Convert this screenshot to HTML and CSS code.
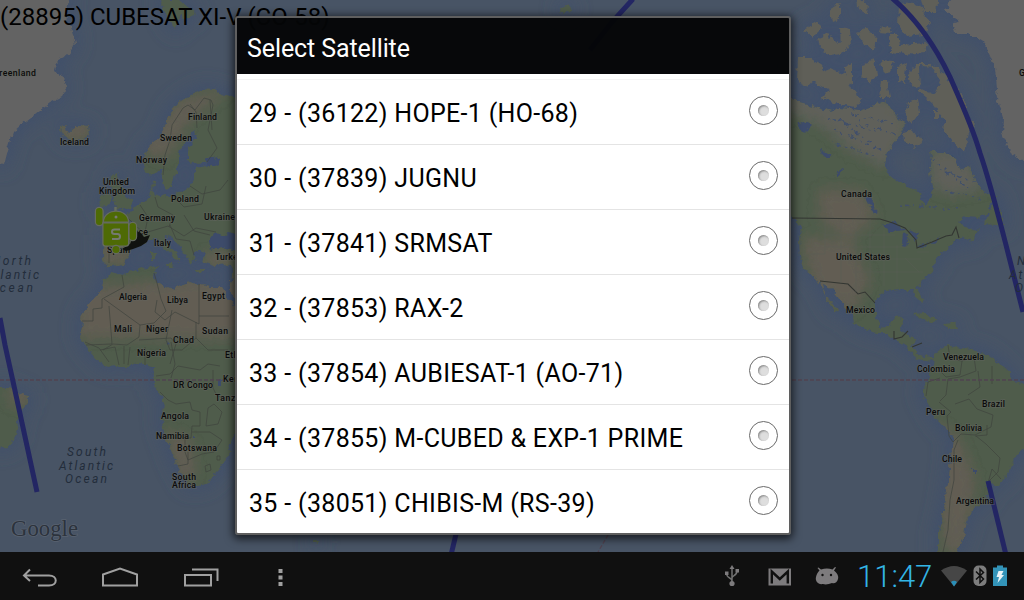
FILE: index.html
```html
<!DOCTYPE html>
<html lang="en">
<head>
    <meta charset="UTF-8">
    <meta name="viewport" content="width=device-width, initial-scale=1.0">
    <title>Satellite Tracker</title>
    <link rel="stylesheet" href="styles.css">
</head>
<body>
    <div class="screen">
        <div class="map">
            <svg class="map-canvas" width="1024" height="552" viewBox="0 0 1024 552">
                <defs>
                    <filter id="rough" x="0" y="0" width="1024" height="552" filterUnits="userSpaceOnUse">
                        <feTurbulence type="fractalNoise" baseFrequency="0.16" numOctaves="3" seed="4" result="n"/>
                        <feDisplacementMap in="SourceGraphic" in2="n" scale="7" xChannelSelector="R" yChannelSelector="G"/>
                    </filter>
                    <filter id="soft" x="-100" y="-100" width="1224" height="752" filterUnits="userSpaceOnUse">
                        <feGaussianBlur stdDeviation="9"/>
                    </filter>
                    <filter id="patch" x="-100" y="-100" width="1224" height="752" filterUnits="userSpaceOnUse">
                        <feGaussianBlur stdDeviation="6"/>
                    </filter>
                    <path id="eurasia" d="M245 98L225 95 214 90 202 89 190 95 178 103 170 112 165 125 160 138 150 145 145 152 143 165 147 175 155 172 160 168 163 180 166 190 172 187 174 178 178 170 178 160 180 150 186 142 190 135 195 130 198 135 192 143 188 150 188 160 198 164 210 162 207 166 195 168 195 178 190 186 184 190 172 195 160 197 154 195 152 188 157 181 153 182 150 192 147 200 138 204 130 212 124 216 133 222 133 238 122 240 103 239 103 260 107 267 113 267 123 265 128 256 133 248 140 245 148 240 155 238 160 241 165 250 172 256 176 260 179 262 177 255 170 247 163 240 165 236 172 238 180 247 186 255 190 263 196 260 193 254 200 250 205 252 203 262 215 266 229 265 234 268 229 290 235 300 245 320Z"/>
                    <path id="africa" d="M111 272L122 275 135 270 150 266 157 267 155 275 156 283 165 286 175 290 180 285 190 282 195 284 210 287 222 287 228 296 235 310 245 325 245 425 232 440 228 455 220 470 208 482 195 486 188 485 183 476 175 462 171 450 165 435 161 420 165 405 160 393 153 385 153 378 155 368 145 365 138 363 130 366 118 366 107 367 95 358 86 347 80 337 83 322 80 318 88 305 100 292 103 280Z"/>
                    <path id="namerica" d="M780 95L792 99 800 103 815 107 830 112 840 108 860 110 875 105 885 100 890 105 895 115 905 125 900 135 893 143 885 158 884 165 890 175 900 183 912 188 919 192 920 201 926 206 930 198 933 188 930 172 932 160 930 152 945 152 955 158 960 170 970 165 975 180 985 193 997 198 988 203 990 212 978 217 965 216 957 222 968 227 976 236 966 242 962 237 952 243 948 248 935 260 933 270 922 280 917 287 923 300 921 305 917 297 913 290 901 290 885 291 877 297 875 305 875 317 880 327 888 326 895 318 904 317 900 327 901 332 915 338 913 348 918 355 932 357 935 361 918 359 907 347 895 340 885 333 875 333 853 323 852 313 840 300 828 285 822 283 823 290 832 303 840 312 833 310 825 295 817 280 805 270 800 257 799 240 801 227 792 217 780 212Z"/>
                    <path id="samerica" d="M927 380L932 370 935 353 948 345 967 349 985 353 1008 370 1011 380 1030 386 1030 445 1015 457 1008 473 1000 485 985 482 989 490 985 503 972 508 967 520 964 535 955 556 938 556 938 533 945 503 950 470 953 437 937 420 922 393Z"/>
                    <path id="icecaps" d="M-5 -5L69 -5 65 15 72 30 75 45 68 55 58 60 55 70 62 75 66 90 62 97 50 103 35 115 22 125 13 133 8 150 4 165 -5 163ZM955 -5L1030 -5 1030 164 1012 155 1002 133 1003 117 998 100 995 67 985 43 968 33 955 33 952 23 960 22 945 10Z"/>
                    <path id="isles" d="M60 126L66 125 64 130 70 132 78 126 88 127 89 135 82 140 72 141 64 137ZM112 175L118 172 116 178 121 183 125 195 133 200 131 208 115 211 117 204 113 200 116 193 110 185ZM101 196L109 193 111 200 108 206 100 207ZM160 0L178 0 195 12 190 20 180 15 176 30 170 24ZM152 252h4v9h-4ZM164 264h9l-1 5ZM196 270h9v2h-9ZM-5 388L10 388 18 393 28 396 28 403 20 412 17 428 15 440 8 447 -5 448ZM989 212L995 198 1002 212 1004 226 985 224ZM966 234L980 228 972 242ZM913 314L925 313 938 321 930 322ZM943 324L955 323 957 328 946 328ZM560 8l8-4 4 5-9 6ZM314 540l4 0 0 4-4-1Z"/>
                    <path id="arctic" d="M797 57L810 57 824 66 820 74 808 87 796 80ZM815 74L830 68 845 74 850 88 862 97 856 107 838 104 822 98 829 91 813 82ZM803 30L818 21 822 28 812 38ZM818 38L828 34 838 44 850 42 845 52 832 56 820 48ZM829 10L840 3 840 18 832 21ZM857 -4L868 4 867 15 858 8ZM840 28L850 30 851 46 841 50ZM856 32L866 28 876 35 874 50 864 44ZM889 35L898 35 900 45 927 43 925 52 905 54 890 52ZM899 5L910 2 922 8 930 24 924 34 907 36 898 24ZM920 -4L938 -4 936 12 924 12ZM882 25L892 28 890 33 880 32ZM845 66L853 63 853 85 847 82ZM862 64L874 60 877 75 870 84 862 75ZM881 60L894 61 891 72 883 74ZM881 80L887 80 890 98 879 98ZM898 66L907 62 904 82 919 88 935 95 940 80 930 64 917 64 908 73 910 84 898 82ZM919 66L938 67 951 82 962 95 966 112 975 124 969 132 965 152 955 144 944 132 945 120 934 104 920 92ZM908 102L918 100 920 112 910 124 905 114ZM904 132L913 130 922 142 915 147 905 141ZM933 112h6v7h-6Z"/>
                    <clipPath id="land">
                        <use href="#eurasia"/><use href="#africa"/><use href="#namerica"/><use href="#samerica"/><use href="#isles"/>
                    </clipPath>
                </defs>

                <rect class="ocean" width="1024" height="552"/>
                <g class="shelf" filter="url(#soft)">
                    <use href="#eurasia"/><use href="#africa"/><use href="#namerica"/><use href="#samerica"/>
                    <use href="#icecaps"/><use href="#isles"/><use href="#arctic"/>
                </g>

                <g filter="url(#rough)">
                    <use href="#icecaps" class="ice"/>
                    <use href="#arctic" class="tundra"/>
                    <g class="green">
                        <use href="#eurasia"/><use href="#africa"/><use href="#namerica"/><use href="#samerica"/><use href="#isles"/>
                    </g>
                    <g clip-path="url(#land)">
                        <g class="dry" filter="url(#patch)">
                            <path d="M75 288L250 275 250 338 80 338Z"/>
                            <path d="M165 430L190 440 196 475 180 480Z"/>
                            <path d="M140 150L180 100 230 88 190 120 165 160Z"/>
                            <path d="M802 238L850 240 870 280 852 312 815 290Z"/>
                            <path d="M820 190L860 190 875 215 850 240 820 220Z"/>
                            <path d="M935 420L960 440 975 480 965 552 945 552Z"/>
                            <path d="M60 120h30v20H60ZM10 385h20v20H10ZM103 240h25v25h-25ZM205 252h30v14h-30Z"/>
                        </g>
                        <g class="pale" filter="url(#patch)">
                            <path d="M780 95L890 98 910 125 885 168 850 150 820 125 780 108Z"/>
                            <path d="M930 150L960 150 985 190 950 195 930 185Z"/>
                        </g>
                    </g>
                    <g class="water">
                        <path d="M208 241L214 233 222 236 228 233 245 238 245 251 220 247 210 250Z"/>
                        <path d="M206 158l8 0 4 5-10 3ZM214 155l8 4-4 6Z"/>
                        <path d="M882 225L895 222 904 230 890 232ZM903 232l5 2-2 14-4-2ZM909 230l10 4-4 8ZM917 246l12-3-8 5ZM930 242l10-4-6 6Z"/>
                        <path d="M797 125l10-4 5 4-8 8ZM820 150l12 4-3 4-7-2ZM835 172l9-4-6 8ZM866 198l3-2 8 16-3 2ZM218 380h5v5h-5ZM166 340l4 4-3 1ZM972 470h4v3h-4ZM192 436h3v3h-3Z"/>
                        <path class="lakes" d="M828 118l50 14M835 130l46 20M832 142l44 14M850 114l45 10M860 122l36 14M840 120l40 30M934 160l34 28M940 170l40 14M945 190l36 10M900 205l60 4"/>
                    </g>
                </g>

                <g class="borders">
                    <path d="M163 175L165 155 170 140 172 125 183 108 188 105 195 110 204 98 211 100 213 105 208 130 217 148 207 162M190 104L196 112 197 128M210 100L212 130M125 215l12 12 10 8M140 205l8 12-3 15M155 197l3 10 15 8-4 12M172 195l12 12 18-3 4-18M190 186l12 8 18-4 8-10M148 232l20-6 16 10 12-8 20 4M170 225l6 14 14 2 4 14M184 215l10 16 16 4M105 244l4 2 0 17"/>
                    <path d="M122 275l2 12-22 12v9l-9 1v12h-11M104 299l36 26 14-2 12-12-5-12-4-16-3-10M109 306l3 38-26 1M157 300l-2 12 10 8 10-8 24 12 0-40M199 316h30M196 322l0 16-14 12-12 0-4-10 6-30M140 325l-1 12-12 8-14-1-10 6M139 340l32-2 5 6-6 20M85 342l14 6 10 14M100 350l15-3 4 18M124 346l0 18M130 347l-2 18M145 365l0-18M171 342l4 22-4 14M196 338l12 12 20 0M156 376l14-2 8-8 22 4 8-6 12 2M160 392l8 8 8 4 14-2 2 8 8 2v14h-8l-1 12-28 0M213 370l0 18 4 8 18 4M208 408l6-4 8 8-4 12-12 2ZM192 432h18l12 8-8 12-12 2-14 6-3-8v-18M205 466l5-2 1 6-5 2ZM188 452l0 12-10 2M217 456l3 0 0 4-3 0Z"/>
                    <path class="strong" d="M792 218L880 219 893 223 905 228 916 240 917 248 932 242 946 236 952 235 956 227 959 238M820 281L848 284 858 294 865 292 875 303M894 331l0 8 8-2 6-6M912 347l10-4"/>
                    <path class="states" d="M825 219v35h-14M841 219v64M856 228v64M870 219v70M884 230v56M897 245v42M825 235h70M826 247h84M841 259h80M857 272h66M905 258l14 14M917 252l12 0"/>
                    <path d="M948 345l2 14 12 2-2 14-14 2-8-8M962 361l12-4 2 14-16 6-12 2-2 16-6 6M940 378l-12 4-2 14M955 404l14-5 8 10 16 6-2 12-16 8-14-1-8 8-4-6-2-20 4-4-12-10M976 436l10 8 14 14-2 14-10 10M978 371l2 16-12 8M992 366l0 18M958 440l-4 10 0 30-4 20-2 30-5 22M988 483l4-14 9 10M975 436l12-1 0-10"/>
                </g>

                <path class="equator" d="M0 380H1024"/>
                <path class="dateline" d="M608 535L598 552"/>

                <g class="track">
                    <path d="M0 318L5 345 14 386 37 492"/>
                    <path d="M633 -1L612 22 590 50"/>
                    <path d="M457 530L451 555"/>
                    <path d="M892 -2C918 20 938 52 950 77C962 104 973 128 980 153C988 176 996 206 1006 245L1023 312"/>
                    <path d="M988 481L1006 555"/>
                </g>

                <g class="labels">
                    <text x="-7" y="76" textLength="43">Greenland</text>
                    <text x="60" y="145" textLength="29">Iceland</text>
                    <text x="188" y="120" textLength="29">Finland</text>
                    <text x="160" y="141" textLength="32">Sweden</text>
                    <text x="136" y="163" textLength="31">Norway</text>
                    <text x="103" y="185" textLength="26">United</text>
                    <text x="99" y="194" textLength="36">Kingdom</text>
                    <text x="171" y="202" textLength="28">Poland</text>
                    <text x="139" y="221" textLength="36">Germany</text>
                    <text x="204" y="220" textLength="31">Ukraine</text>
                    <text x="120" y="235" textLength="28">France</text>
                    <text x="154" y="246" textLength="17">Italy</text>
                    <text x="107" y="253" textLength="23">Spain</text>
                    <text x="215" y="260" textLength="27">Turkey</text>
                    <text x="119" y="300" textLength="28">Algeria</text>
                    <text x="167" y="303" textLength="21">Libya</text>
                    <text x="202" y="299" textLength="23">Egypt</text>
                    <text x="114" y="332" textLength="18">Mali</text>
                    <text x="146" y="332" textLength="22">Niger</text>
                    <text x="202" y="334" textLength="26">Sudan</text>
                    <text x="173" y="343" textLength="21">Chad</text>
                    <text x="137" y="356" textLength="29">Nigeria</text>
                    <text x="225" y="358" textLength="34">Ethiopia</text>
                    <text x="223" y="382" textLength="26">Kenya</text>
                    <text x="173" y="388" textLength="40">DR Congo</text>
                    <text x="215" y="401" textLength="39">Tanzania</text>
                    <text x="161" y="419" textLength="28">Angola</text>
                    <text x="156" y="439" textLength="33">Namibia</text>
                    <text x="177" y="451" textLength="40">Botswana</text>
                    <text x="172" y="480" textLength="24">South</text>
                    <text x="172" y="488" textLength="24">Africa</text>
                    <text x="841" y="197" textLength="31">Canada</text>
                    <text x="836" y="260" textLength="54">United States</text>
                    <text x="846" y="313" textLength="29">Mexico</text>
                    <text x="943" y="360" textLength="41">Venezuela</text>
                    <text x="917" y="372" textLength="38">Colombia</text>
                    <text x="982" y="407" textLength="23">Brazil</text>
                    <text x="926" y="415" textLength="19">Peru</text>
                    <text x="955" y="431" textLength="27">Bolivia</text>
                    <text x="942" y="462" textLength="20">Chile</text>
                    <text x="956" y="504" textLength="38">Argentina</text>
                    <text x="1019" y="76" textLength="43">Greenland</text>
                </g>
                <g class="sea-labels">
                    <text x="-8" y="265" textLength="39">North</text>
                    <text x="-15" y="279" textLength="54">Atlantic</text>
                    <text x="-11" y="292" textLength="44">Ocean</text>
                    <text x="67" y="456" textLength="39">South</text>
                    <text x="59" y="470" textLength="54">Atlantic</text>
                    <text x="65" y="483" textLength="42">Ocean</text>
                    <text x="1017" y="265" textLength="39">North</text>
                    <text x="1009" y="279" textLength="54">Atlantic</text>
                    <text x="1015" y="292" textLength="44">Ocean</text>
                </g>
                <text class="google" x="11" y="536" textLength="67" lengthAdjust="spacingAndGlyphs">Google</text>

                <!-- ground station marker and its shadow -->
                <path class="marker-shadow" d="M122 249L130 244 136 231 141 233 144 237 150 235 147 242 141 246 133 249 126 251Z"/>
                <g class="marker">
                    <path d="M115.500 212v-5"/>
                    <rect x="96" y="208" width="6.500" height="17" rx="3.200"/>
                    <rect x="129.500" y="223" width="6.500" height="17" rx="3.200"/>
                    <path d="M104 221.500c1-13 23-13 24 0Z"/>
                    <path d="M103.500 223.500h24.500v20q0 2-2 2h-20.500q-2 0-2-2Z"/>
                    <circle cx="116" cy="249.500" r="3.500"/>
                </g>
                <circle class="marker-eye" cx="116" cy="217" r="1.500"/>
                <path class="marker-s" d="M120 229.500h-5.500q-2.500 0-2.500 2.200t2.500 2.300h3q2.500 0 2.500 2.500t-2.500 2.500h-5.500"/>
            </svg>
            <div class="sat-name">(28895) CUBESAT XI-V (CO-58)</div>

            <div class="dialog">
                <div class="dialog-title">Select Satellite</div>
                <ul class="sat-list">
                    <li><span>29 - (36122) HOPE-1 (HO-68)</span><i class="radio"></i></li>
                    <li><span>30 - (37839) JUGNU</span><i class="radio"></i></li>
                    <li><span>31 - (37841) SRMSAT</span><i class="radio"></i></li>
                    <li><span>32 - (37853) RAX-2</span><i class="radio"></i></li>
                    <li><span>33 - (37854) AUBIESAT-1 (AO-71)</span><i class="radio"></i></li>
                    <li><span>34 - (37855) M-CUBED &amp; EXP-1 PRIME</span><i class="radio"></i></li>
                    <li><span>35 - (38051) CHIBIS-M (RS-39)</span><i class="radio"></i></li>
                </ul>
            </div>
        </div>

        <div class="system-bar">
            <div class="nav-keys">
                <svg width="36" height="24" viewBox="0 0 36 24"><path d="M2 10.500H27C36 10.500 36 20.500 27 20.500H16M8 4.500L2 10.500 8 16"/></svg>
                <svg width="38" height="24" viewBox="0 0 38 24"><path d="M1 9.500L18 3.500 35 9.500V20.500H1Z"/></svg>
                <svg width="36" height="24" viewBox="0 0 36 24"><path d="M1 10h26v10.500H1ZM8 4.500H33.500V16"/></svg>
                <svg class="dots" width="8" height="24" viewBox="0 0 8 24"><path d="M2.500 4h4v4H2.500ZM2.500 10.500h4v4H2.500ZM2.500 17h4v4H2.500Z"/></svg>
            </div>
            <div class="status">
                <svg class="usb" width="16" height="24" viewBox="0 0 16 24"><path d="M8 19V4M8 17C8 13 2.500 15 2.500 9M8 14C8 11 13 12 13 7"/><path class="solid" d="M8 1l2.500 4h-5ZM1 7.500h3.500V11H1ZM11.500 5H15v3.500h-3.500Z"/><circle class="solid" cx="8" cy="19.500" r="2.600"/></svg>
                <svg class="gmail" width="24" height="18" viewBox="0 0 24 18"><path class="solid" d="M.5.500h22.500v17H.5Z"/><path d="M3.800 15.500V3.500L11.800 11 19.800 3.500V15.500"/></svg>
                <svg class="droid" width="24" height="18" viewBox="0 0 24 18"><path class="solid" d="M4.500 3.500L2.500 1 3.500.5 6 2.500Q12 .5 17.500 2.500L20 0l1 .5-2 3C22 6 24 9 23 12c-1 4-4 5-6 4-3 1-6 2-9 1C3 18 0 14 1 10c.500-3 2-5 3.500-6.500Z"/><circle cx="7.500" cy="8" r="1.200"/><circle cx="16" cy="8" r="1.200"/></svg>
                <span class="clock">11:47</span>
                <svg class="wifi" width="26" height="22" viewBox="0 0 26 22"><path d="M0 5.500Q13-3.500 26 5.500L13 21.500Z"/><path class="level" d="M10 17Q13 14.500 16 17L13 21.500Z"/></svg>
                <svg class="bt" width="14" height="22" viewBox="0 0 14 22"><rect x=".5" y=".5" width="13" height="20.500" rx="5"/><path d="M3 6.500L10.500 14 7 17.500V4L10.500 7.500 3 14.500"/></svg>
                <svg class="battery" width="14" height="22" viewBox="0 0 14 22"><path d="M0 2.500h4V.5h6v2h4V21H0Z"/><path class="bolt" d="M5.500 6h5L8.500 10h2.500L4.500 18 6 12H3.500Z"/></svg>
            </div>
        </div>
    </div>
</body>
</html>
```

FILE: styles.css
```css
* {
    box-sizing: border-box;
    margin: 0;
    padding: 0;
}

body {
    font-family: Roboto, "Noto Sans", sans-serif;
    background-color: #101010;
    overflow: hidden;
}

.screen {
    display: flex;
    flex-direction: column;
    width: 1024px;
    height: 600px;
}

/* Map */
.map {
    position: relative;
    flex: 1;
    overflow: hidden;
}

.map-canvas {
    display: block;
}

.ocean {
    fill: #485465;
}

.shelf {
    fill: #3f4f6b;
    stroke: #3f4f6b;
    stroke-width: 8;
}

.ice {
    fill: #636363;
}

.tundra {
    fill: #5e5f59;
}

.green {
    fill: #4f5b4b;
}

.dry {
    fill: #625d52;
}

.pale {
    fill: #5f605a;
}

.water {
    fill: #3c4c6b;
}

.lakes {
    fill: none;
    stroke: #42506a;
    stroke-width: 1.5;
    stroke-dasharray: 2 3 4 5;
}

.borders {
    fill: none;
    stroke: #3f433d;
    stroke-width: 0.7;
}

.borders .strong {
    stroke: #333632;
    stroke-width: 1.1;
}

.borders .states {
    stroke: #585c54;
    stroke-width: 0.5;
}

.equator,
.dateline {
    fill: none;
    stroke: #504350;
    stroke-width: 1.3;
    stroke-dasharray: 4 2;
}

.labels {
    font-size: 8.7px;
    font-weight: 500;
    fill: #0b0b0b;
    stroke: #62655f;
    stroke-width: 1.6;
    stroke-opacity: 0.6;
    paint-order: stroke;
}

.sea-labels {
    font-size: 12px;
    font-style: italic;
    fill: #232d3b;
}

.google {
    font-family: "Liberation Serif", serif;
    font-size: 24px;
    fill: #2c333d;
    stroke: #596270;
    stroke-width: 1.5;
    paint-order: stroke;
}

.track {
    fill: none;
    stroke: #232663;
    stroke-width: 5;
}

.marker-shadow {
    fill: #101210;
}

.marker {
    fill: #4e6a05;
    stroke: #666c60;
    stroke-width: 2.4;
    paint-order: stroke;
}

.marker-eye {
    fill: #777;
}

.marker-s {
    fill: none;
    stroke: #757a70;
    stroke-width: 2;
}

.sat-name {
    position: absolute;
    top: 3px;
    left: 0;
    font-size: 24px;
    line-height: 28px;
    color: #000;
    white-space: nowrap;
}

/* Dialog */
.dialog {
    position: absolute;
    top: 16px;
    left: 235px;
    width: 556px;
    height: 519px;
    border: 2px solid #5f5f5f;
    border-radius: 3px;
    overflow: hidden;
    box-shadow: 0 2px 9px 2px rgba(0,0,0,0.65);
}

.dialog-title {
    height: 56px;
    padding-left: 10px;
    background-color: rgba(4,5,6,0.96);
    color: #fff;
    font-size: 25px;
    line-height: 62px;
    letter-spacing: -0.1px;
}

.sat-list {
    height: 459px;
    padding-top: 5px;
    background-color: #fff;
    list-style: none;
    overflow: hidden;
}

.sat-list li {
    display: flex;
    align-items: center;
    justify-content: space-between;
    height: 65px;
    padding: 0 11px 3px 12px;
    border-top: 1px solid #e4e4e4;
    color: #000;
    font-size: 25px;
    letter-spacing: 0.32px;
}

.sat-list li:first-child {
    border-top-color: #f4f4f4;
}

.sat-list span {
    padding-top: 5px;
}

.radio {
    display: flex;
    align-items: center;
    justify-content: center;
    width: 29px;
    height: 29px;
    border: 1px solid #6a6a6a;
    border-radius: 50%;
}

.radio::after {
    content: "";
    width: 11px;
    height: 11px;
    border-radius: 50%;
    background-color: #dedede;
    box-shadow: inset 1px 1px 2px #888;
}

/* System bar */
.system-bar {
    display: flex;
    justify-content: space-between;
    height: 48px;
    background-color: #101010;
}

.nav-keys {
    display: flex;
    align-items: center;
    padding: 2px 0 0 22px;
}

.nav-keys svg {
    margin-right: 44px;
    fill: none;
    stroke: #a0a0a0;
    stroke-width: 2;
}

.nav-keys svg + svg + svg {
    margin-right: 56px;
}

.nav-keys .dots {
    fill: #a0a0a0;
    stroke: none;
}

.status {
    display: flex;
    align-items: center;
    padding-right: 17px;
}

.usb {
    margin-right: 28px;
    fill: none;
    stroke: #727272;
    stroke-width: 1.5;
}

.solid {
    fill: #7d7b7d;
    stroke: none;
}

.gmail {
    margin: 2px 23px 0 0;
    fill: none;
    stroke: #101010;
    stroke-width: 2.4;
}

.droid {
    margin-right: 18px;
    fill: #101010;
}

.clock {
    width: 77px;
    margin-right: 7px;
    padding-top: 2px;
    color: #33b5e5;
    font-size: 31px;
    font-weight: 300;
    line-height: 48px;
    white-space: nowrap;
}

.wifi {
    margin-right: 6px;
    fill: #464646;
}

.level {
    fill: #2a8fb8;
}

.bt {
    margin-right: 6px;
    fill: #7d7d7d;
}

.bt path {
    fill: none;
    stroke: #101010;
    stroke-width: 1.5;
}

.battery {
    fill: #3394b9;
}

.bolt {
    fill: #e8f4f8;
}
```
